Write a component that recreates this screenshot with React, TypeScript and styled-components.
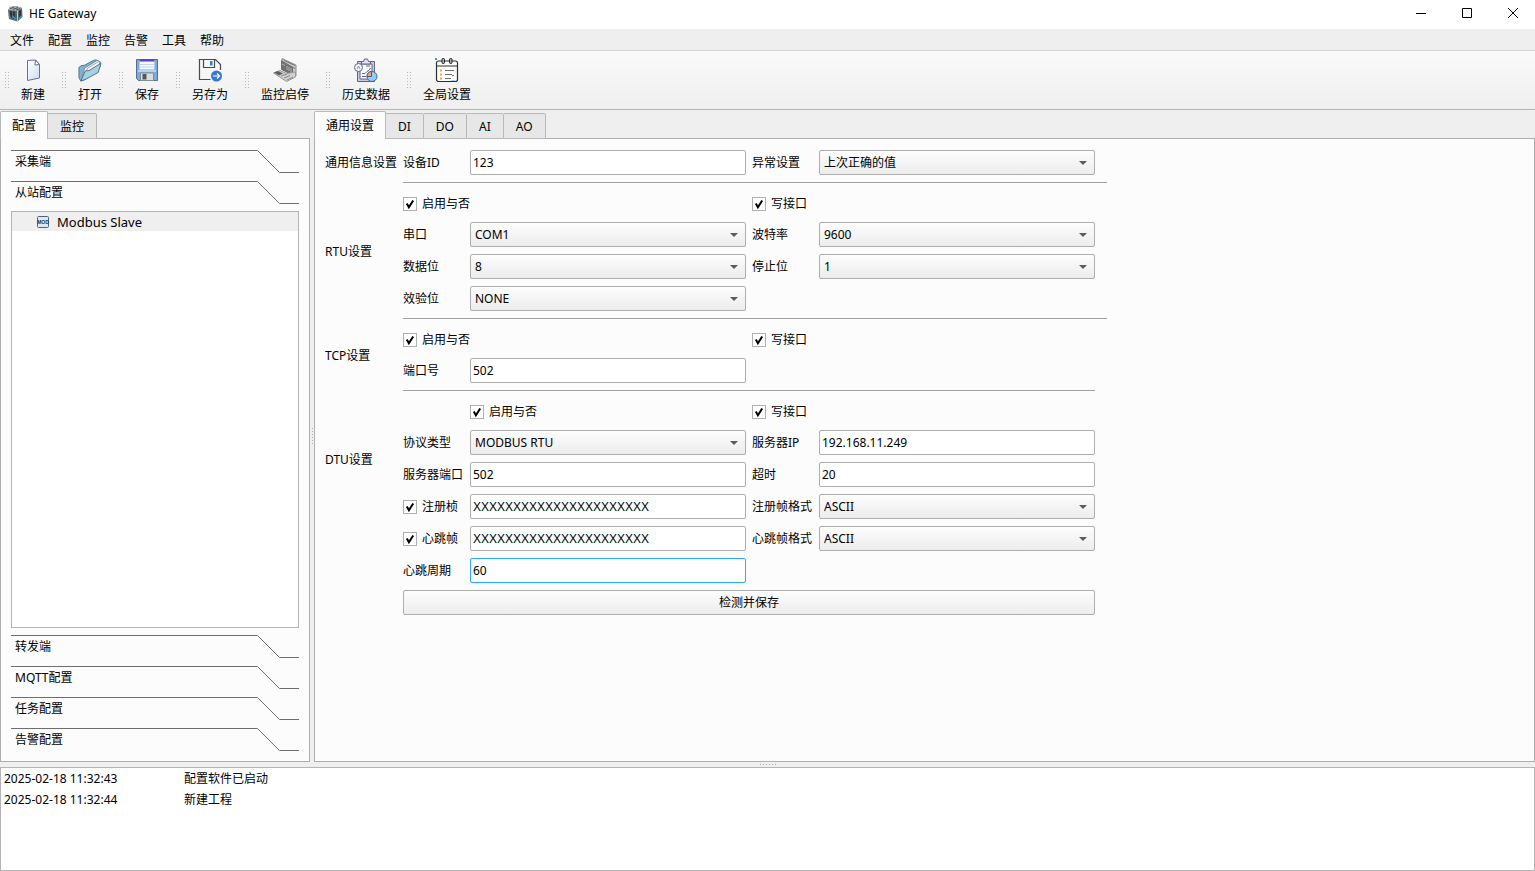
import React from "react";
import styled, { createGlobalStyle, css } from "styled-components";

const Global = createGlobalStyle`
  * { box-sizing: border-box; }
  html, body, #root { height: 100%; margin: 0; }
  body, button, input, select {
    font-family: "Noto Sans", "Noto Sans CJK SC", sans-serif;
    font-size: 12px;
    line-height: 16px;
    color: #000;
  }
`;

const Window = styled.div`
  min-height: 100%;
  display: flex;
  flex-direction: column;
  background: #efefef;
`;

const TitleBar = styled.header`
  height: 29px;
  display: flex;
  align-items: flex-start;
  justify-content: space-between;
  background: #fff;
  padding-left: 7px;
`;

const Title = styled.h1`
  height: 27px;
  display: flex;
  align-items: center;
  gap: 6px;
  margin: 0;
  font-size: 12px;
  font-weight: 400;
`;

const WindowButtons = styled.div`
  display: flex;
`;

const WindowButton = styled.button`
  width: 46px;
  height: 26px;
  display: grid;
  place-items: center;
  padding: 0 0 0 2px;
  border: 0;
  background: none;
`;

const MenuBar = styled.nav`
  height: 22px;
  display: flex;
  align-items: center;
  gap: 14px;
  padding: 2px 0 0 10px;
  border-bottom: 1px solid #d3d3d3;
`;

const MenuButton = styled.button`
  padding: 0;
  border: 0;
  background: none;
`;

const ToolBar = styled.div`
  height: 59px;
  display: flex;
  padding-left: 5px;
  background: linear-gradient(#fafafa, #efefef);
  border-bottom: 1px solid #b4b4b4;
`;

const ToolGroup = styled.div`
  display: flex;
  align-items: center;
  gap: 12px;
  padding-right: 17px;
`;

const ToolButton = styled.button`
  display: flex;
  flex-direction: column;
  align-items: center;
  gap: 5px;
  padding: 0;
  border: 0;
  background: none;
`;

const Main = styled.div`
  flex: 1;
  display: flex;
`;

const Side = styled.aside`
  width: 310px;
  display: flex;
  flex-direction: column;
`;

const Content = styled.main`
  flex: 1;
  display: flex;
  flex-direction: column;
`;

const TabBar = styled.div`
  height: 29px;
  display: flex;
  align-items: flex-end;
`;

const Tab = styled.button<{ $active?: boolean }>`
  height: 26px;
  padding: 2px 12px 0 12px;
  border: 1px solid #b9b9b9;
  border-left-width: 0;
  border-radius: 0 2px 0 0;
  background: #e7e7e7;
  ${(p) =>
    p.$active &&
    css`
      height: 28px;
      padding: 0 11px;
      border-left-width: 1px;
      border-bottom: 0;
      border-radius: 2px 2px 0 0;
      background: #fcfcfc;
    `}
`;

const Panel = styled.div`
  flex: 1;
  background: #fcfcfc;
  border: 1px solid #aeaeae;
  border-top: 0;
`;

const TabRule = styled.span`
  flex: 1;
  border-bottom: 1px solid #aeaeae;
`;

const SidePanel = styled(Panel)`
  display: flex;
  flex-direction: column;
  gap: 8px;
  padding: 11px 10px 10px;
`;

const SectionButton = styled.button`
  height: 23px;
  display: grid;
  grid-template-columns: 1fr 42px;
  padding: 0;
  border: 0;
  background: none;
  text-align: left;
`;

const SectionText = styled.span`
  height: 23px;
  padding: 3px 4px;
  border-top: 1px solid #6e6e6e;
`;

const Tree = styled.ul`
  flex: 1;
  margin: -1px 0;
  padding: 0;
  list-style: none;
  background: #fff;
  border: 1px solid #b4b4b4;
`;

const TreeItem = styled.li`
  height: 19px;
  display: flex;
  align-items: center;
  gap: 7px;
  padding-left: 24px;
  background: #efefef;
  font-size: 13px;
`;

const Splitter = styled.div<{ $vertical?: boolean }>`
  display: grid;
  place-items: center;
  ${(p) => (p.$vertical ? "width: 4px;" : "height: 5px;")}
`;

const Form = styled.form`
  display: grid;
  grid-template-columns: 72px 704px;
  column-gap: 6px;
  padding: 11px 10px;
`;

const GroupLabel = styled.div<{ $top?: boolean }>`
  align-self: ${(p) => (p.$top ? "start" : "center")};
  padding-top: ${(p) => (p.$top ? 52 : 0)}px;
  white-space: nowrap;
`;

const Group = styled.div`
  display: grid;
  grid-template-columns: 61px 276px 61px 276px;
  column-gap: 6px;
  row-gap: 7px;
  align-items: center;
`;

const Rule = styled.hr<{ $short?: boolean }>`
  grid-column: 2;
  width: ${(p) => (p.$short ? 692 : 704)}px;
  height: 1px;
  margin: 7px 0 9px;
  border: 0;
  background: #a0a0a0;
`;

const Label = styled.label`
  white-space: nowrap;
`;

const CheckLabel = styled.label<{ $col?: string }>`
  height: ${(p) => (p.$col ? 23 : 25)}px;
  display: flex;
  align-items: center;
  gap: 5px;
  grid-column: ${(p) => p.$col || "auto"};
  white-space: nowrap;
`;

const CheckBox = styled.input.attrs({ type: "checkbox" })`
  appearance: none;
  width: 14px;
  height: 14px;
  margin: 0;
  border: 1px solid #b0b0b0;
  background: #fff;
  &:checked {
    background: #fff
      url("data:image/svg+xml,%3Csvg xmlns='http://www.w3.org/2000/svg' viewBox='0 0 12 12'%3E%3Cpath d='M2.8 5.500 4.900 9.200 9.200 2.500' fill='none' stroke='%23000' stroke-width='2'/%3E%3C/svg%3E");
  }
`;

const fieldBox = css`
  width: 100%;
  height: 25px;
  border: 1px solid #aeaeae;
  border-radius: 2px;
  outline: 0;
`;

const TextField = styled.input<{ $active?: boolean; $wide?: boolean }>`
  ${fieldBox}
  padding: 0 2px;
  background: #fff;
  border-color: ${(p) => (p.$active ? "#30a8f8" : "#aeaeae")};
  ${(p) => p.$wide && 'font-family: "Liberation Sans", sans-serif;'}
`;

const SelectWrap = styled.span`
  display: block;
  position: relative;
  &::after {
    content: "";
    position: absolute;
    right: 8px;
    top: 11px;
    border: 4px solid transparent;
    border-top-color: #5c5c5c;
    border-bottom: 0;
    pointer-events: none;
  }
`;

const Select = styled.select`
  ${fieldBox}
  appearance: none;
  padding: 0 4px;
  background: linear-gradient(#fdfdfd, #ececec);
`;

const SaveCell = styled.div`
  grid-column: 1 / -1;
  width: 692px;
`;

const SaveButton = styled.button`
  ${fieldBox}
  display: block;
  padding: 0;
  background: linear-gradient(#fdfdfd, #ececec);
`;

const Log = styled.div`
  height: 104px;
  padding: 0 3px;
  background: #fff;
  border: 1px solid #b4b4b4;
`;

const LogTable = styled.table`
  border-collapse: collapse;
  td {
    height: 21px;
    padding: 0;
  }
  td:first-child {
    width: 180px;
  }
`;

/* A grid of single-pixel dots, three pixels apart. */
function Dots({ cols, rows, color }: { cols: number; rows: number; color: string }) {
  const w = cols * 3 - 2;
  const h = rows * 3 - 2;
  const row = Array.from({ length: cols }, (_, c) => c * 3);
  const d = Array.from({ length: rows }, (_, r) =>
    row.map((x) => `M${x} ${r * 3}h1v1h-1Z`).join("")
  ).join("");
  return (
    <svg width={w} height={h} viewBox={`0 0 ${w} ${h}`} aria-hidden="true">
      <path d={d} fill={color} />
    </svg>
  );
}

function AppIcon() {
  return (
    <svg width="16" height="16" viewBox="0 0 16 16" aria-hidden="true">
      <path d="M1 4 3 1l6-1 6 2 .5 9-5 4.500L2 13Z" fill="#59646a" />
      <path d="M1 4 3 1l6-1 6 2-4.500 3Z" fill="#a7b0b3" />
      <path d="M3 2.500 7 1.500M6 3.500l5-2M9 4l4-1.500" stroke="#4a5356" />
      <path d="M10.500 5v10.500" stroke="#c9d0d2" />
      <path d="M4 5v7M7 5.500V13M13 4.500V12" stroke="#23292c" strokeWidth="1.500" />
      <path d="m2 9 1.500 3M5.500 10l3 3.500M12 13l2.500-3" stroke="#2fa3b8" strokeWidth="1.300" />
    </svg>
  );
}

function NewIcon() {
  return (
    <svg width="24" height="24" viewBox="0 0 24 24" aria-hidden="true">
      <defs>
        <linearGradient id="page" x1="0" y1="0" x2="1" y2="1">
          <stop offset="0" stopColor="#fff" />
          <stop offset="1" stopColor="#cfdcf6" />
        </linearGradient>
      </defs>
      <path d="M6.500 2.500 14.500 2 18.500 6.500V20L6.500 22.500Z" fill="url(#page)" stroke="#68738a" />
      <path d="M14.500 2 14 7l4.500-.5Z" fill="#fff" stroke="#68738a" />
    </svg>
  );
}

function OpenIcon() {
  return (
    <svg width="24" height="24" viewBox="1 0 25 24" aria-hidden="true">
      <path d="M2 20V9.500l2-2 4-.5 9-5 3-.5 4 2V9L8 22l-4 1.500Z" fill="#7fb3cc" stroke="#4d7186" />
      <path d="M5 20 8 10 21 2l3 1.500-2 8L9 20Z" fill="#f2f6f8" stroke="#7b8f99" />
      <path d="M8 17 11 10l12-7" fill="none" stroke="#9aa9b1" />
      <path d="M4 23.500 8.500 13l4-.5L25 5l-3 9.500-12.500 7Z" fill="#a4d1e5" stroke="#4d7186" />
    </svg>
  );
}

function SaveIcon() {
  return (
    <svg width="24" height="24" viewBox="0 0 24 24" aria-hidden="true">
      <path d="M1.500 1.500h21v21H3.500l-2-2Z" fill="#7fa9dd" stroke="#566c90" />
      <path d="M4.500 2h15v9.500h-15Z" fill="#f2f7fe" />
      <path d="M4.500 1.500h15v2h-15Z" fill="#5040c4" />
      <path d="M5 6.500h14M5 9h14" stroke="#c3d4ea" />
      <path d="M3 13h18" stroke="#b6d2f0" strokeWidth="2" />
      <path d="M5.500 15h13v7.500h-13Z" fill="#dadeda" stroke="#80908f" />
      <path d="M7.500 16h4v5.500h-4Z" fill="#525a56" />
    </svg>
  );
}

function SaveAsIcon() {
  return (
    <svg width="24" height="24" viewBox="0 0 24 24" aria-hidden="true">
      <path
        d="M12.500 21.500H1.500v-20h16l5 5V12M5.500 1.500v8h11v-8"
        fill="none"
        stroke="#444a56"
        strokeWidth="1.200"
      />
      <path d="M12 3h2.500v4.500H12z" fill="#357bd2" />
      <circle cx="18.500" cy="18" r="5.500" fill="#3579d0" />
      <path d="M15 18h6.500m-2.500-2.500 2.500 2.500-2.500 2.500" fill="none" stroke="#fff" strokeWidth="1.200" />
    </svg>
  );
}

function MonitorIcon() {
  return (
    <svg width="24" height="24" viewBox="0 0 24 24" aria-hidden="true">
      <path d="m9 .5 14 6.500v11L9 11.500Z" fill="#c7c7c7" stroke="#8d8d8d" />
      <path d="m8 2 12 7v9L8 11.500Z" fill="#6f6f6f" />
      <path d="m11 2.500 11 5M11 5l11 5.500" stroke="#777" />
      <path d="m9 6 3 1.500M14 8v4m2-3v4m2-3v4" stroke="#b5b5b5" />
      <path d="M.5 15 7 12.500l6.500 3 9-1.500v5l-9 4.500Z" fill="#d0d0d0" stroke="#999" />
      <path d="m1 14.500 4-1.500 5 2.500-4 2Z" fill="#606060" />
      <path d="m8 18 6-2M11 20l6-2.500M14 22l6-3" stroke="#8a8a8a" />
    </svg>
  );
}

function HistoryIcon() {
  return (
    <svg width="24" height="24" viewBox="0 0 24 24" aria-hidden="true" fill="none">
      <path d="M3.500 3.500h17v20h-17Z" fill="#c9cbe0" stroke="#5f6386" />
      <path d="M6 6h12v15H6Z" fill="#fafaff" stroke="#5f6386" />
      <path d="M7.500 3.500h2l1-2.500h3l1 2.500h2V6h-9Z" fill="#dfe1f2" stroke="#5f6386" />
      <path d="M8 15.500h3l2-2 2-1 1.500-2.500M8 18.500h4M12 8h4" stroke="#5f6386" />
      <circle cx="4.500" cy="9.500" r="4" fill="#f4f5ff" stroke="#5f6386" />
      <path d="m3 11 1.500-3L6 11" stroke="#8b8fb0" />
      <circle cx="18" cy="18.500" r="5" fill="#8fccff" stroke="#4c5f8c" />
      <path d="M17.500 18.500v-5a5 5 0 0 0-4.500 5Z" fill="#f0a850" stroke="#4c5f8c" />
    </svg>
  );
}

function SettingsIcon() {
  return (
    <svg width="24" height="24" viewBox="0 0 24 24" aria-hidden="true">
      <rect x="1.500" y="3" width="21" height="20.500" rx="2" fill="#fcfcfc" stroke="#2e2e2e" strokeWidth="1.200" />
      <path d="M2 8h20" stroke="#2e2e2e" />
      <path d="M10 12.500h9M10 16.500h7M10 20.500h6" stroke="#6e6e6e" />
      <rect x="7" y=".5" width="2.500" height="5" rx="1" fill="#aaa" stroke="#222" />
      <rect x="14.500" y=".5" width="2.500" height="5" rx="1" fill="#aaa" stroke="#222" />
      <path d="M5 11.500h2v2H5zm0 4h2v2H5zm0 4h2v2H5z" fill="#eea548" />
      <path d="M0 0h2v2H0z" fill="#3b9ac4" />
      <path d="M15 23a4 3 0 0 1 6 0Z" fill="#8ad4f4" />
      <path d="M17 17h2v1h-2z" fill="#e05050" />
    </svg>
  );
}

function ModIcon() {
  return (
    <svg width="14" height="14" viewBox="0 0 14 14" aria-hidden="true">
      <rect x="1.500" y="1.500" width="11" height="11" rx="1" fill="#dfe8f0" stroke="#4b647c" />
      <text
        x="7"
        y="9"
        fontSize="5"
        fontWeight="700"
        textAnchor="middle"
        fontFamily="Liberation Sans, sans-serif"
        fill="#20384f"
      >
        MOD
      </text>
    </svg>
  );
}

const tools = [
  { text: "新建", icon: <NewIcon /> },
  { text: "打开", icon: <OpenIcon /> },
  { text: "保存", icon: <SaveIcon /> },
  { text: "另存为", icon: <SaveAsIcon /> },
  { text: "监控启停", icon: <MonitorIcon /> },
  { text: "历史数据", icon: <HistoryIcon /> },
  { text: "全局设置", icon: <SettingsIcon /> },
];

function Section({ text }: { text: string }) {
  return (
    <SectionButton type="button">
      <SectionText>{text}</SectionText>
      <svg width="42" height="23" viewBox="0 0 42 23" fill="none" aria-hidden="true">
        <path d="M0 .5h.5l22 22H42" stroke="#6e6e6e" />
      </svg>
    </SectionButton>
  );
}

type FieldProps = { id: string; label: string; value: string };

function SelectField({ id, label, value }: FieldProps) {
  return (
    <>
      <Label htmlFor={id}>{label}</Label>
      <SelectWrap>
        <Select id={id} defaultValue={value}>
          <option>{value}</option>
        </Select>
      </SelectWrap>
    </>
  );
}

function InputField({ id, label, value, active }: FieldProps & { active?: boolean }) {
  return (
    <>
      <Label htmlFor={id}>{label}</Label>
      <TextField id={id} defaultValue={value} $active={active} />
    </>
  );
}

function Check({ text, col }: { text: string; col?: string }) {
  return (
    <CheckLabel $col={col}>
      <CheckBox defaultChecked />
      {text}
    </CheckLabel>
  );
}

function CheckedInput({ text, value }: { text: string; value: string }) {
  return (
    <>
      <Check text={text} />
      <TextField aria-label={text} defaultValue={value} $wide />
    </>
  );
}

export default function App() {
  return (
    <Window>
      <Global />
      <TitleBar>
        <Title>
          <AppIcon />
          HE Gateway
        </Title>
        <WindowButtons>
          <WindowButton aria-label="最小化">
            <svg width="10" height="10"><path d="M0 5.500h10" stroke="#000" /></svg>
          </WindowButton>
          <WindowButton aria-label="最大化">
            <svg width="10" height="10"><path d="M.5.5h9v9h-9Z" fill="none" stroke="#000" /></svg>
          </WindowButton>
          <WindowButton aria-label="关闭">
            <svg width="10" height="10"><path d="m0 0 10 10M10 0 0 10" stroke="#000" /></svg>
          </WindowButton>
        </WindowButtons>
      </TitleBar>
      <MenuBar>
        {["文件", "配置", "监控", "告警", "工具", "帮助"].map((m) => (
          <MenuButton key={m}>{m}</MenuButton>
        ))}
      </MenuBar>
      <ToolBar>
        {tools.map((t) => (
          <ToolGroup key={t.text}>
            <Dots cols={2} rows={6} color="#b8b8b8" />
            <ToolButton>
              {t.icon}
              {t.text}
            </ToolButton>
          </ToolGroup>
        ))}
      </ToolBar>
      <Main>
        <Side>
          <TabBar>
            <Tab $active>配置</Tab>
            <Tab>监控</Tab>
            <TabRule />
          </TabBar>
          <SidePanel>
            <Section text="采集端" />
            <Section text="从站配置" />
            <Tree>
              <TreeItem>
                <ModIcon />
                Modbus Slave
              </TreeItem>
            </Tree>
            <Section text="转发端" />
            <Section text="MQTT配置" />
            <Section text="任务配置" />
            <Section text="告警配置" />
          </SidePanel>
        </Side>
        <Splitter $vertical>
          <Dots cols={1} rows={6} color="#b0b0b0" />
        </Splitter>
        <Content>
          <TabBar>
            <Tab $active>通用设置</Tab>
            <Tab>DI</Tab>
            <Tab>DO</Tab>
            <Tab>AI</Tab>
            <Tab>AO</Tab>
            <TabRule />
          </TabBar>
          <Panel>
            <Form>
              <GroupLabel>通用信息设置</GroupLabel>
              <Group>
                <InputField id="device" label="设备ID" value="123" />
                <SelectField id="fault" label="异常设置" value="上次正确的值" />
              </Group>
              <Rule />
              <GroupLabel>RTU设置</GroupLabel>
              <Group>
                <Check text="启用与否" col="1 / 3" />
                <Check text="写接口" col="3 / 5" />
                <SelectField id="port" label="串口" value="COM1" />
                <SelectField id="baud" label="波特率" value="9600" />
                <SelectField id="data" label="数据位" value="8" />
                <SelectField id="stop" label="停止位" value="1" />
                <SelectField id="parity" label="效验位" value="NONE" />
              </Group>
              <Rule />
              <GroupLabel>TCP设置</GroupLabel>
              <Group>
                <Check text="启用与否" col="1 / 3" />
                <Check text="写接口" col="3 / 5" />
                <InputField id="tcp" label="端口号" value="502" />
              </Group>
              <Rule $short />
              <GroupLabel $top>DTU设置</GroupLabel>
              <Group>
                <Check text="启用与否" col="2" />
                <Check text="写接口" col="3 / 5" />
                <SelectField id="protocol" label="协议类型" value="MODBUS RTU" />
                <InputField id="ip" label="服务器IP" value="192.168.11.249" />
                <InputField id="server-port" label="服务器端口" value="502" />
                <InputField id="timeout" label="超时" value="20" />
                <CheckedInput text="注册桢" value="XXXXXXXXXXXXXXXXXXXXXX" />
                <SelectField id="reg-format" label="注册帧格式" value="ASCII" />
                <CheckedInput text="心跳帧" value="XXXXXXXXXXXXXXXXXXXXXX" />
                <SelectField id="beat-format" label="心跳帧格式" value="ASCII" />
                <InputField id="period" label="心跳周期" value="60" active />
                <SaveCell>
                  <SaveButton type="button">检测并保存</SaveButton>
                </SaveCell>
              </Group>
            </Form>
          </Panel>
        </Content>
      </Main>
      <Splitter>
        <Dots cols={6} rows={1} color="#b0b0b0" />
      </Splitter>
      <Log>
        <LogTable>
          <tbody>
            <tr><td>2025-02-18 11:32:43</td><td>配置软件已启动</td></tr>
            <tr><td>2025-02-18 11:32:44</td><td>新建工程</td></tr>
          </tbody>
        </LogTable>
      </Log>
    </Window>
  );
}
